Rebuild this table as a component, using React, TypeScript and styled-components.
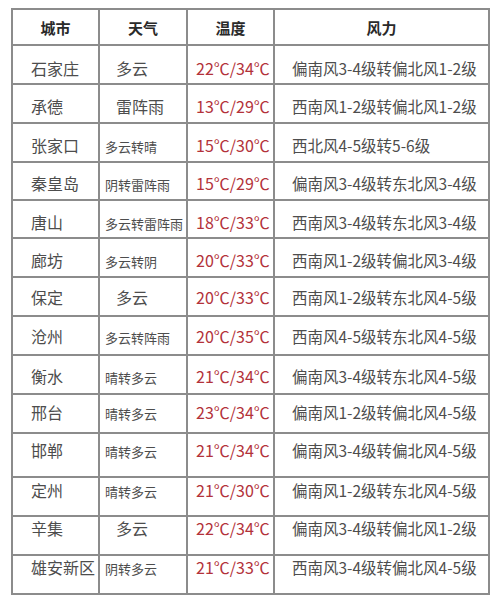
import React from "react";
import styled, { createGlobalStyle } from "styled-components";

const Global = createGlobalStyle`
  html, body { margin: 0; padding: 0; background: #fff; }
  body { font-family: "Noto Sans CJK SC", "Noto Sans", sans-serif; }
`;

const Page = styled.div`
  width: 500px;
  height: 611px;
  padding: 8px 0 0 11px;
  box-sizing: border-box;
  background: #fff;
`;

const Grid = styled.div`
  display: grid;
  grid-template-columns: 87px 88px 87px 215px;
  width: max-content;
  border-top: 2px solid #8c8c8c;
  border-left: 2px solid #8c8c8c;
`;

const Cell = styled.div<{ $h: number; $top: number; $pl: number }>`
  box-sizing: border-box;
  height: ${(p) => p.$h + 2}px;
  border-right: 2px solid #8c8c8c;
  border-bottom: 2px solid #8c8c8c;
  padding: ${(p) => p.$top}px 0 0 ${(p) => p.$pl}px;
  line-height: 20px;
  white-space: nowrap;
  color: #4d4d4d;
`;

const HeadCell = styled.div`
  box-sizing: border-box;
  height: 36px;
  border-right: 2px solid #8c8c8c;
  border-bottom: 2px solid #8c8c8c;
  display: flex;
  align-items: center;
  justify-content: center;
  font-size: 15px;
  font-weight: 700;
  color: #2a2a2a;
`;

const City = styled.span`
  font-size: 16px;
`;

const Weather = styled.span<{ $small: boolean }>`
  font-size: ${(p) => (p.$small ? 13 : 16)}px;
`;

const Temp = styled.span`
  font-size: 16px;
  color: #b3323a;
`;

const Wind = styled.span`
  font-size: 15.5px;
`;

type Row = {
  city: string;
  weather: string;
  temp: string;
  wind: string;
  h: number;
  top: number;
};

const rows: Row[] = [
  { city: "石家庄", weather: "多云", temp: "22℃/34℃", wind: "偏南风3-4级转偏北风1-2级", h: 37, top: 12 },
  { city: "承德", weather: "雷阵雨", temp: "13℃/29℃", wind: "西南风1-2级转偏北风1-2级", h: 37, top: 11 },
  { city: "张家口", weather: "多云转晴", temp: "15℃/30℃", wind: "西北风4-5级转5-6级", h: 37, top: 11 },
  { city: "秦皇岛", weather: "阴转雷阵雨", temp: "15℃/29℃", wind: "偏南风3-4级转东北风3-4级", h: 36, top: 10 },
  { city: "唐山", weather: "多云转雷阵雨", temp: "18℃/33℃", wind: "西南风3-4级转东北风3-4级", h: 36, top: 11 },
  { city: "廊坊", weather: "多云转阴", temp: "20℃/33℃", wind: "西南风1-2级转偏北风3-4级", h: 37, top: 11 },
  { city: "保定", weather: "多云", temp: "20℃/33℃", wind: "西南风1-2级转东北风4-5级", h: 37, top: 9 },
  { city: "沧州", weather: "多云转阵雨", temp: "20℃/35℃", wind: "西南风4-5级转东北风4-5级", h: 37, top: 9 },
  { city: "衡水", weather: "晴转多云", temp: "21℃/34℃", wind: "偏南风3-4级转东北风4-5级", h: 37, top: 10 },
  { city: "邢台", weather: "晴转多云", temp: "23℃/34℃", wind: "偏南风1-2级转偏北风4-5级", h: 37, top: 7 },
  { city: "邯郸", weather: "晴转多云", temp: "21℃/34℃", wind: "偏南风3-4级转偏北风4-5级", h: 42, top: 6 },
  { city: "定州", weather: "晴转多云", temp: "21℃/30℃", wind: "偏南风1-2级转东北风4-5级", h: 37, top: 2 },
  { city: "辛集", weather: "多云", temp: "22℃/34℃", wind: "偏南风3-4级转偏北风1-2级", h: 37, top: 1 },
  { city: "雄安新区", weather: "阴转多云", temp: "21℃/33℃", wind: "西南风3-4级转偏北风4-5级", h: 37, top: 1 },
];

export default function App() {
  return (
    <Page>
      <Global />
      <Grid>
        <HeadCell>城市</HeadCell>
        <HeadCell>天气</HeadCell>
        <HeadCell>温度</HeadCell>
        <HeadCell>风力</HeadCell>
        {rows.map((r) => {
          const small = r.weather.length > 3;
          return (
            <React.Fragment key={r.city}>
              <Cell $h={r.h} $top={r.top} $pl={18}>
                <City>{r.city}</City>
              </Cell>
              <Cell $h={r.h} $top={r.top} $pl={small ? 5 : 16}>
                <Weather $small={small}>{r.weather}</Weather>
              </Cell>
              <Cell $h={r.h} $top={r.top} $pl={8}>
                <Temp>{r.temp}</Temp>
              </Cell>
              <Cell $h={r.h} $top={r.top} $pl={17}>
                <Wind>{r.wind}</Wind>
              </Cell>
            </React.Fragment>
          );
        })}
      </Grid>
    </Page>
  );
}
